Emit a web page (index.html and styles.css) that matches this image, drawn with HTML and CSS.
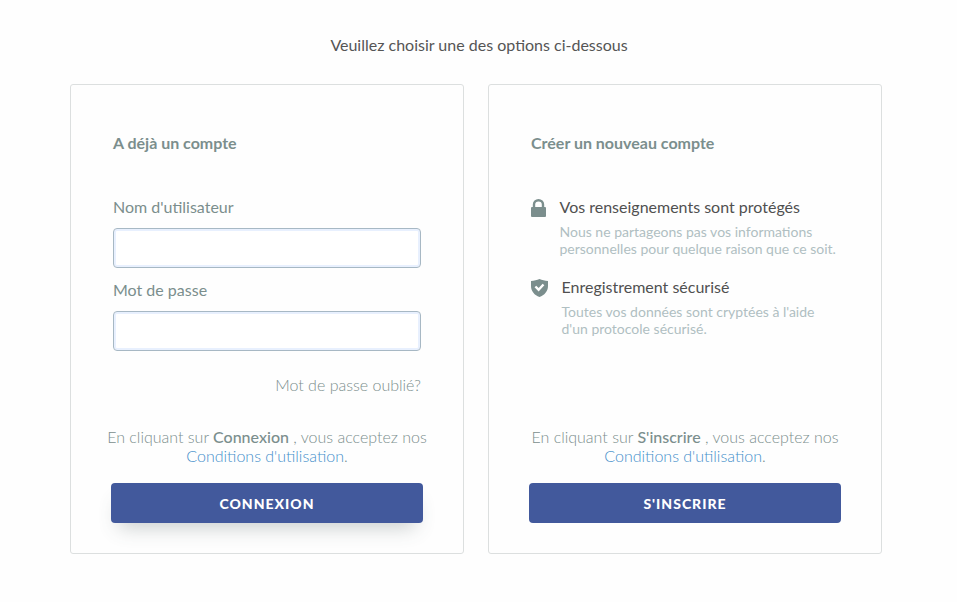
FILE: index.html
```html
<!DOCTYPE html>
<html lang="fr">
<head>
    <meta charset="UTF-8">
    <meta name="viewport" content="width=device-width, initial-scale=1.0">
    <title>Connexion</title>
    <link rel="stylesheet" href="styles.css">
</head>
<body>
<div class="container">
    <p class="intro">Veuillez choisir une des options ci-dessous</p>
    <div class="cards">
        <form class="card" onsubmit="return false">
            <h2>A déjà un compte</h2>
            <div class="content">
                <label for="username">Nom d'utilisateur</label>
                <input type="text" id="username">
                <label for="password">Mot de passe</label>
                <input type="password" id="password">
                <a href="#" class="forgot">Mot de passe oublié?</a>
            </div>
            <p class="terms">En cliquant sur <b>Connexion</b> , vous acceptez nos<br><a href="#">Conditions d'utilisation</a>.</p>
            <button class="active">Connexion</button>
        </form>
        <div class="card">
            <h2>Créer un nouveau compte</h2>
            <div class="content">
                <div class="feature">
                    <svg width="15" height="18" viewBox="0 0 15 18">
                        <path d="M3 8.500V5.500a4.500 4.300 0 0 1 9 0V8.500" fill="none" stroke="#7b8e8d" stroke-width="2.400"/>
                        <rect y="8" width="15" height="10" rx="1" fill="#7b8e8d"/>
                    </svg>
                    <div>
                        <h3>Vos renseignements sont protégés</h3>
                        <p>Nous ne partageons pas vos informations<br>personnelles pour quelque raison que ce soit.</p>
                    </div>
                </div>
                <div class="feature">
                    <svg width="17" height="18" viewBox="0 0 17 18">
                        <path d="M8.500 0C6 1.200 3.200 1.800 0 1.900V7c0 5.200 3.600 9.300 8.500 11C13.400 16.300 17 12.200 17 7V1.900C13.800 1.800 11 1.200 8.500 0z" fill="#7b8e8d"/>
                        <path d="M4.400 7.500l3.200 3.200 4.900-5.200" fill="none" stroke="#fff" stroke-width="2.400"/>
                    </svg>
                    <div>
                        <h3>Enregistrement sécurisé</h3>
                        <p>Toutes vos données sont cryptées à l'aide<br>d'un protocole sécurisé.</p>
                    </div>
                </div>
            </div>
            <p class="terms">En cliquant sur <b>S'inscrire</b> , vous acceptez nos<br><a href="#">Conditions d'utilisation</a>.</p>
            <button>S'inscrire</button>
        </div>
    </div>
</div>
</body>
</html>
```
FILE: styles.css
```css
* {
    box-sizing: border-box;
}

body {
    margin: 0;
    background-color: #fefefe;
    font-family: Lato, sans-serif;
    font-size: 16px;
    line-height: 19px;
    color: #7b8e8d;
}

h2, h3, p {
    margin: 0;
}

a {
    text-decoration: none;
}

.container {
    padding: 35px 75px 0 70px;
}

.intro {
    margin: 0 0 30px;
    text-align: center;
    padding-left: 6px;
    color: #555;
}

.cards {
    display: flex;
    gap: 24px;
}

.card {
    display: flex;
    flex-direction: column;
    width: 394px;
    height: 470px;
    padding: 48px 40px 30px;
    background-color: #fefefe;
    border: 1px solid #dcdfdf;
    border-radius: 3px;
}

h2 {
    padding: 0 2px;
    margin-bottom: 45px;
    font-size: 16px;
    font-weight: 700;
}

.content {
    display: flex;
    flex-direction: column;
    flex: 1;
    padding: 0 2px;
}

label {
    margin-bottom: 12px;
}

input {
    height: 40px;
    margin-bottom: 12px;
    padding: 0 12px;
    font: inherit;
    background-color: #fff;
    border: 1px solid #a7b8c4;
    border-radius: 4px;
    box-shadow: inset 0 0 0 2px #e8f0fe;
}

.forgot {
    margin-top: 12px;
    align-self: flex-end;
    font-weight: 300;
    color: #7b8e8d;
}

.feature {
    display: flex;
    gap: 13.5px;
    margin-bottom: 20px;
}

.feature svg {
    flex: none;
    margin-top: 2px;
}

h3 {
    font-size: 16px;
    font-weight: 400;
    color: #505050;
    margin-bottom: 7px;
}

.feature p {
    font-size: 14px;
    line-height: 17px;
    color: #b0bfc2;
}

.terms {
    margin: 0 -10px 18px;
    text-align: center;
    font-weight: 300;
}

.terms b {
    font-weight: 500;
}

.terms a {
    color: #4590cb;
}

button {
    height: 40px;
    padding: 1px 0 0;
    border: none;
    border-radius: 4px;
    background-color: #42599c;
    color: #fff;
    font-family: inherit;
    font-size: 14px;
    font-weight: 900;
    letter-spacing: 1px;
    text-transform: uppercase;
    cursor: pointer;
}

button.active {
    box-shadow: 0 12px 20px -8px rgba(70, 85, 85, 0.3);
}
```
